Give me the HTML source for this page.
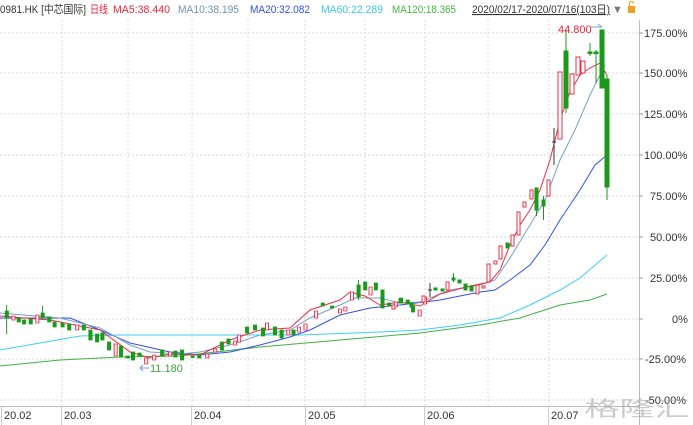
<!DOCTYPE html>
<html><head><meta charset="utf-8"><style>
body{margin:0;width:693px;height:425px;overflow:hidden;background:#fff;font-family:"Liberation Sans","Noto Sans CJK SC",sans-serif}
svg{display:block}
text{font-family:"Liberation Sans","Noto Sans CJK SC",sans-serif}
</style></head><body>
<svg width="693" height="425" viewBox="0 0 693 425" xmlns="http://www.w3.org/2000/svg">
<g font-size="11">
<text x="0" y="13" fill="#333" textLength="86" lengthAdjust="spacingAndGlyphs">0981.HK [中芯国际]</text>
<text x="90" y="13" fill="#e8243c" textLength="18" lengthAdjust="spacingAndGlyphs">日线</text>
<text x="113" y="13" fill="#e8243c" textLength="57" lengthAdjust="spacingAndGlyphs">MA5:38.440</text>
<text x="178" y="13" fill="#6d94b8" textLength="61" lengthAdjust="spacingAndGlyphs">MA10:38.195</text>
<text x="250" y="13" fill="#3050ee" textLength="60" lengthAdjust="spacingAndGlyphs">MA20:32.082</text>
<text x="321" y="13" fill="#3cc8e8" textLength="62" lengthAdjust="spacingAndGlyphs">MA60:22.289</text>
<text x="392" y="13" fill="#40b840" textLength="64" lengthAdjust="spacingAndGlyphs">MA120:18.365</text>
<text x="472" y="13" fill="#333" text-decoration="underline" textLength="138" lengthAdjust="spacingAndGlyphs">2020/02/17-2020/07/16(103日)</text>
<text x="612" y="13" fill="#777">▼</text>
</g>
<rect x="628" y="6" width="7" height="7" fill="#f0a020"/>
<path d="M629.5 6 V3.5 a2 2 0 0 1 4 0" fill="none" stroke="#f0a020" stroke-width="1.2"/>
<g stroke="#d8d8d8" stroke-dasharray="2,2" stroke-width="1">
<line x1="0" y1="33" x2="639" y2="33"/><line x1="0" y1="73" x2="639" y2="73"/><line x1="0" y1="114" x2="639" y2="114"/><line x1="0" y1="155" x2="639" y2="155"/><line x1="0" y1="196" x2="639" y2="196"/><line x1="0" y1="237" x2="639" y2="237"/><line x1="0" y1="278" x2="639" y2="278"/><line x1="0" y1="319" x2="639" y2="319"/><line x1="0" y1="359" x2="639" y2="359"/><line x1="0" y1="400" x2="639" y2="400"/>
<line x1="62" y1="20" x2="62" y2="406"/><line x1="192" y1="20" x2="192" y2="406"/><line x1="305" y1="20" x2="305" y2="406"/><line x1="425" y1="20" x2="425" y2="406"/><line x1="549" y1="20" x2="549" y2="406"/>
<line x1="128" y1="20" x2="128" y2="406"/><line x1="248" y1="20" x2="248" y2="406"/><line x1="365" y1="20" x2="365" y2="406"/><line x1="488" y1="20" x2="488" y2="406"/>
</g>
<line x1="639.5" y1="20" x2="639.5" y2="425" stroke="#bbb"/>
<line x1="0" y1="406.5" x2="639" y2="406.5" stroke="#bbb"/>
<g stroke="#ccc"><line x1="1.5" y1="406" x2="1.5" y2="425"/><line x1="61.5" y1="406" x2="61.5" y2="425"/><line x1="191.5" y1="406" x2="191.5" y2="425"/><line x1="305.5" y1="406" x2="305.5" y2="425"/><line x1="424.5" y1="406" x2="424.5" y2="425"/><line x1="548.5" y1="406" x2="548.5" y2="425"/></g>
<g font-size="11" fill="#333">
<text x="4" y="419">20.02</text><text x="64" y="419">20.03</text><text x="194" y="419">20.04</text><text x="308" y="419">20.05</text><text x="427" y="419">20.06</text><text x="551" y="419">20.07</text>
<text x="644" y="37">175.00%</text><text x="644" y="77">150.00%</text><text x="644" y="118">125.00%</text><text x="644" y="159">100.00%</text><text x="650" y="200">75.00%</text><text x="650" y="241">50.00%</text><text x="650" y="282">25.00%</text><text x="672" y="323">0%</text><text x="645" y="363">-25.00%</text><text x="645" y="404">-50.00%</text>
</g>
<g stroke="#999" stroke-width="1"><line x1="639" y1="33" x2="643" y2="33"/><line x1="639" y1="73" x2="643" y2="73"/><line x1="639" y1="114" x2="643" y2="114"/><line x1="639" y1="155" x2="643" y2="155"/><line x1="639" y1="196" x2="643" y2="196"/><line x1="639" y1="237" x2="643" y2="237"/><line x1="639" y1="278" x2="643" y2="278"/><line x1="639" y1="319" x2="643" y2="319"/><line x1="639" y1="359" x2="643" y2="359"/></g>
<g fill="none" stroke-width="1">
<polyline stroke="#3cd0ee" points="0,350 40,343 80,336 120,335 200,335 300,335 380,332 420,330 460,325 500,318 530,305 560,290 580,278 607,255"/>
<polyline stroke="#44b044" points="0,366 60,360 120,357 180,356 260,347 340,340 420,333 480,325 520,318 560,305 590,300 607,294"/>
<polyline stroke="#3050ee" points="0,318 70,318 100,330 130,343 170,352 200,355 230,352 260,345 290,337 310,330 340,315 370,308 400,305 440,300 480,292 495,290 510,280 530,265 545,245 560,220 580,190 595,165 607,155"/>
<polyline stroke="#7aa0c4" points="0,313 60,318 100,328 130,345 150,352 180,354 200,352 230,345 260,335 290,330 310,318 340,305 355,298 380,298 400,303 420,302 450,290 480,285 495,280 510,258 530,225 545,200 560,160 575,130 590,95 605,65"/>
<polyline stroke="#e8304a" points="0,316 50,320 100,330 130,352 150,358 170,354 200,355 230,340 260,330 290,328 310,310 340,300 350,292 365,296 380,305 400,302 420,306 440,294 470,286 490,282 500,270 510,245 520,225 530,210 540,190 550,160 560,120 570,92 580,75 590,68 600,63 607,75"/>
</g>
<g transform="scale(1.3274,1)" stroke-width="0.75">
<g fill="#1a9a1a" stroke="#1a9a1a">
<rect x="4" y="311" width="2.3" height="7"/><rect x="13" y="318" width="2.3" height="4"/><rect x="17" y="320" width="2.3" height="4"/><rect x="22" y="319" width="2.3" height="5"/><rect x="31" y="313" width="2.3" height="5"/><rect x="36" y="317" width="2.3" height="5"/><rect x="40" y="322" width="2.3" height="5"/><rect x="46" y="323" width="2.3" height="4"/><rect x="51" y="324" width="2.3" height="6"/><rect x="62" y="325" width="2.3" height="5"/><rect x="67" y="330" width="2.3" height="10"/><rect x="72" y="334" width="2.3" height="8"/><rect x="76" y="333" width="2.3" height="7"/><rect x="81" y="342" width="2.3" height="8"/><rect x="90" y="346" width="2.3" height="11"/><rect x="95" y="356" width="2.3" height="2"/><rect x="99" y="352" width="2.3" height="8"/><rect x="104" y="353" width="2.3" height="3"/><rect x="121" y="350" width="2.3" height="6"/><rect x="131" y="351" width="2.3" height="6"/><rect x="136" y="350" width="2.3" height="10"/><rect x="144" y="356" width="2.3" height="1.5"/><rect x="149" y="355" width="2.3" height="3"/><rect x="166" y="342" width="2.3" height="8"/><rect x="171" y="339" width="2.3" height="5"/><rect x="185" y="327" width="2.3" height="6"/><rect x="191" y="325" width="2.3" height="5"/><rect x="197" y="328" width="2.3" height="8"/><rect x="206" y="327" width="2.3" height="8"/><rect x="211" y="330" width="2.3" height="8"/><rect x="220" y="330" width="2.3" height="5"/><rect x="242" y="303" width="2.3" height="3"/><rect x="249" y="306" width="2.3" height="2"/><rect x="269" y="285" width="2.3" height="12"/><rect x="274" y="282" width="2.3" height="8"/><rect x="282" y="283" width="2.3" height="7"/><rect x="287" y="301" width="2.3" height="7"/><rect x="292" y="303" width="2.3" height="3"/><rect x="301" y="298" width="2.3" height="5"/><rect x="306" y="300" width="2.3" height="4"/><rect x="310" y="306" width="2.3" height="6"/>
</g>
<g fill="#fff" stroke="#e8304a">
<rect x="9" y="316" width="2.3" height="4"/><rect x="27" y="315" width="2.3" height="8"/><rect x="57" y="325" width="2.3" height="5"/><rect x="86" y="344" width="2.3" height="12"/><rect x="109" y="358" width="2.3" height="6"/><rect x="115" y="355" width="2.3" height="5"/><rect x="127" y="352" width="2.3" height="4"/><rect x="155" y="354" width="2.3" height="4"/><rect x="161" y="349" width="2.3" height="3"/><rect x="176" y="341" width="2.3" height="4"/><rect x="179" y="335" width="2.3" height="7"/><rect x="200" y="323" width="2.3" height="7"/><rect x="216" y="330" width="2.3" height="5"/><rect x="224" y="327" width="2.3" height="5"/><rect x="229" y="324" width="2.3" height="6"/><rect x="237" y="311" width="2.3" height="7"/><rect x="255" y="309" width="2.3" height="4"/><rect x="259" y="307" width="2.3" height="4"/><rect x="264" y="292" width="2.3" height="8"/><rect x="278" y="287" width="2.3" height="8"/><rect x="297" y="302" width="2.3" height="5"/><rect x="315" y="310" width="2.3" height="6"/><rect x="319" y="297" width="2.3" height="7"/>
</g>
<g stroke="#1a9a1a"><line x1="5" y1="305" x2="5" y2="334"/><line x1="32" y1="306" x2="32" y2="320"/><line x1="270" y1="280" x2="270" y2="300"/></g>
</g>
<g stroke-width="1">
<g fill="#1a9a1a" stroke="#1a9a1a">
<rect x="381" y="290" width="3" height="13"/><rect x="399" y="299" width="3" height="4"/><rect x="410" y="303" width="3" height="4"/><rect x="434" y="288" width="3" height="2"/><rect x="441" y="289" width="3" height="2"/><rect x="452" y="278" width="3" height="2"/><line x1="453.5" y1="273" x2="453.5" y2="282"/><rect x="458" y="280" width="3" height="3"/><rect x="464" y="284" width="3" height="6"/><rect x="470" y="286" width="3" height="5"/><rect x="506" y="243" width="3" height="5"/><rect x="535" y="188" width="3" height="22"/><line x1="536.5" y1="188" x2="536.5" y2="216"/><rect x="542" y="200" width="3" height="6"/><line x1="543.5" y1="196" x2="543.5" y2="220"/>
<rect x="564" y="51" width="4" height="57"/><line x1="566" y1="30" x2="566" y2="113"/><rect x="588" y="52" width="4" height="1.5"/><line x1="590" y1="43" x2="590" y2="56"/><rect x="594" y="52" width="4" height="1.5"/><line x1="596" y1="50" x2="596" y2="83"/><rect x="600" y="30" width="4" height="58"/><rect x="605" y="79" width="4" height="108"/><line x1="607" y1="75" x2="607" y2="200"/>
</g>
<g fill="#fff" stroke="#e8304a">
<rect x="392" y="305" width="3" height="4"/><rect x="422" y="296" width="3" height="6"/><rect x="446" y="282" width="3" height="8"/><rect x="476" y="285" width="3" height="9"/><rect x="482" y="286" width="3" height="2"/><rect x="487" y="264" width="3" height="18"/><rect x="494" y="261" width="3" height="3"/><rect x="499" y="246" width="3" height="13"/><rect x="511" y="235" width="3" height="11"/><rect x="517" y="212" width="3" height="23"/><rect x="523" y="202" width="3" height="5"/><rect x="530" y="190" width="3" height="9"/><rect x="547" y="180" width="3" height="16"/><rect x="558" y="72" width="4" height="67"/><rect x="570" y="74" width="4" height="20"/><rect x="576" y="57" width="4" height="18"/><rect x="581" y="61" width="4" height="12"/>
</g>
<line x1="430" y1="283" x2="430" y2="297" stroke="#333"/><line x1="428" y1="290" x2="432" y2="290" stroke="#333"/>
<line x1="554" y1="128" x2="554" y2="165" stroke="#333"/><line x1="552" y1="142" x2="556" y2="142" stroke="#333"/>
</g>
<text x="558" y="33" font-size="11" fill="#e8243c">44.800</text>
<path d="M590 27 H602 M598 24 L602 27" stroke="#7aa0c4" fill="none"/>
<text x="150" y="372" font-size="11" fill="#40a040">11.180</text>
<path d="M149 368 H140 M143 365 L140 368 L143 371" stroke="#7aa0c4" fill="none"/>
<text x="584" y="416" font-size="21" fill="#aaa" fill-opacity="0.6" textLength="106" lengthAdjust="spacingAndGlyphs">格隆汇</text>
</svg>
</body></html>
